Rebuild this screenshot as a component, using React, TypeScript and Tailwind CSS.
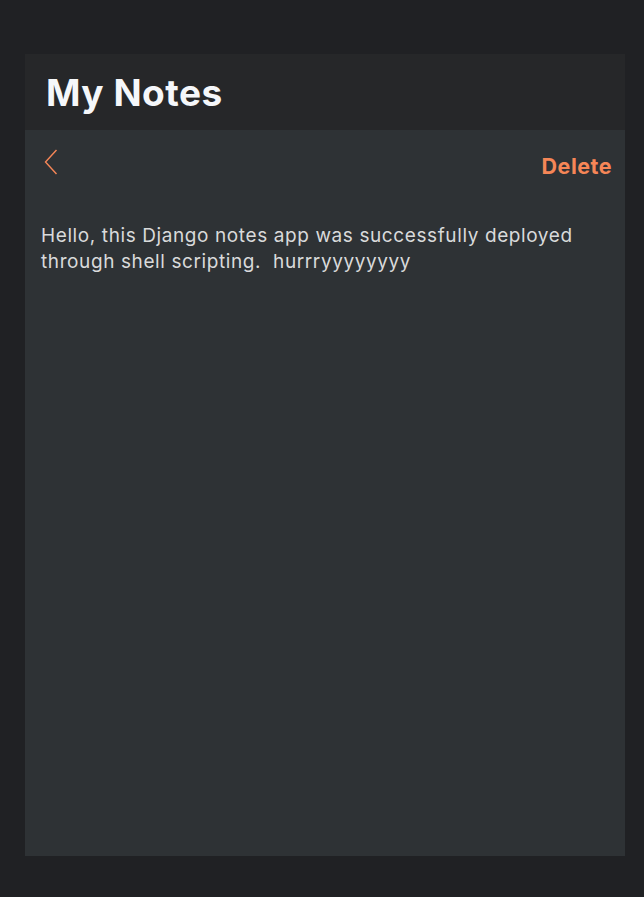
import React from "react";

export default function App() {
  return (
    <div className="min-h-[897px] w-full bg-[#202124] px-[25px] pt-[54px] pb-[41px]" style={{ fontFamily: "Inter, 'Noto Sans', sans-serif" }}>
      <div className="flex h-[802px] w-[600px] flex-col bg-[#2e3235]">
        <div className="flex h-[76px] items-center bg-[#262729] px-[21px]">
          <h1 className="text-[37px] font-bold leading-none tracking-[0.5px] text-[#f5f7fa]">My Notes</h1>
        </div>
        <div className="flex items-start justify-between pl-[19px] pr-[13px] pt-[19px]">
          <svg width="14" height="26" viewBox="0 0 14 26" fill="none">
            <path d="M12.5 1 L1.5 13 L12.5 25" stroke="#f68657" strokeWidth="1.4" />
          </svg>
          <button className="mt-[7px] text-[21.5px] font-bold leading-none tracking-[0.5px] text-[#f68657]">Delete</button>
        </div>
        <p className="mt-[45px] px-[16px] text-[19px] leading-[26px] tracking-[0.6px] text-[#d9dadb]">
          Hello, this Django notes app was successfully deployed through shell scripting.&nbsp; hurrryyyyyyyy
        </p>
      </div>
    </div>
  );
}
